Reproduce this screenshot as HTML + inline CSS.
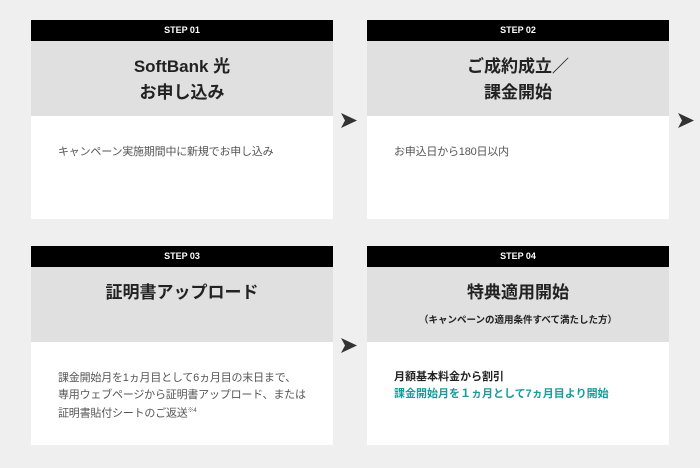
<!DOCTYPE html>
<html><head><meta charset="utf-8"><style>
*{margin:0;padding:0;box-sizing:border-box}
body{width:700px;height:468px;background:#efefef;position:relative;overflow:hidden;font-family:"Liberation Sans","Noto Sans CJK JP",sans-serif}
.card{position:absolute;width:302px;background:#fff}
.hd{height:21px;background:#000;color:#fff;font-size:9px;font-weight:bold;text-align:center;line-height:21px}
.tt{background:#e0e0e0;text-align:center;color:#222;font-weight:bold;font-size:17px;line-height:26px}
.bd{font-size:11px;color:#555;line-height:16.5px;padding-left:27px;white-space:nowrap;letter-spacing:-0.2px}
.arr{position:absolute;width:16px;height:15px}
</style></head><body>
<div class="card" style="left:31px;top:20px;height:199px">
<div class="hd">STEP 01</div>
<div class="tt" style="height:75px;padding-top:13px">SoftBank 光<br>お申し込み</div>
<div class="bd" style="padding-top:28px">キャンペーン実施期間中に新規でお申し込み</div>
</div>
<div class="card" style="left:367px;top:20px;height:199px">
<div class="hd">STEP 02</div>
<div class="tt" style="height:75px;padding-top:13px">ご成約成立／<br>課金開始</div>
<div class="bd" style="padding-top:28px">お申込日から180日以内</div>
</div>
<div class="card" style="left:31px;top:246px;height:199px">
<div class="hd">STEP 03</div>
<div class="tt" style="height:75px;padding-top:13px">証明書アップロード</div>
<div class="bd" style="padding-top:28px">課金開始月を1ヵ月目として6ヵ月目の末日まで、<br>専用ウェブページから証明書アップロード、または<br>証明書貼付シートのご返送<sup style="font-size:6px">※4</sup></div>
</div>
<div class="card" style="left:367px;top:246px;height:199px">
<div class="hd">STEP 04</div>
<div class="tt" style="height:75px;padding-top:13px">特典適用開始<div style="font-size:9.5px;line-height:14px;margin-top:8px">（キャンペーンの適用条件すべて満たした方）</div></div>
<div class="bd" style="padding-top:27px;font-weight:bold;color:#222;letter-spacing:0">月額基本料金から割引<br><span style="color:#1a9b9b">課金開始月を１ヵ月として7ヵ月目より開始</span></div>
</div>
<svg class="arr" style="left:341px;top:113px" viewBox="0 0 16 15"><path d="M0 0L16 7.5L0 15L4 7.5Z" fill="#333"/></svg>
<svg class="arr" style="left:678px;top:113px" viewBox="0 0 16 15"><path d="M0 0L16 7.5L0 15L4 7.5Z" fill="#333"/></svg>
<svg class="arr" style="left:341px;top:338px" viewBox="0 0 16 15"><path d="M0 0L16 7.5L0 15L4 7.5Z" fill="#333"/></svg>
</body></html>
